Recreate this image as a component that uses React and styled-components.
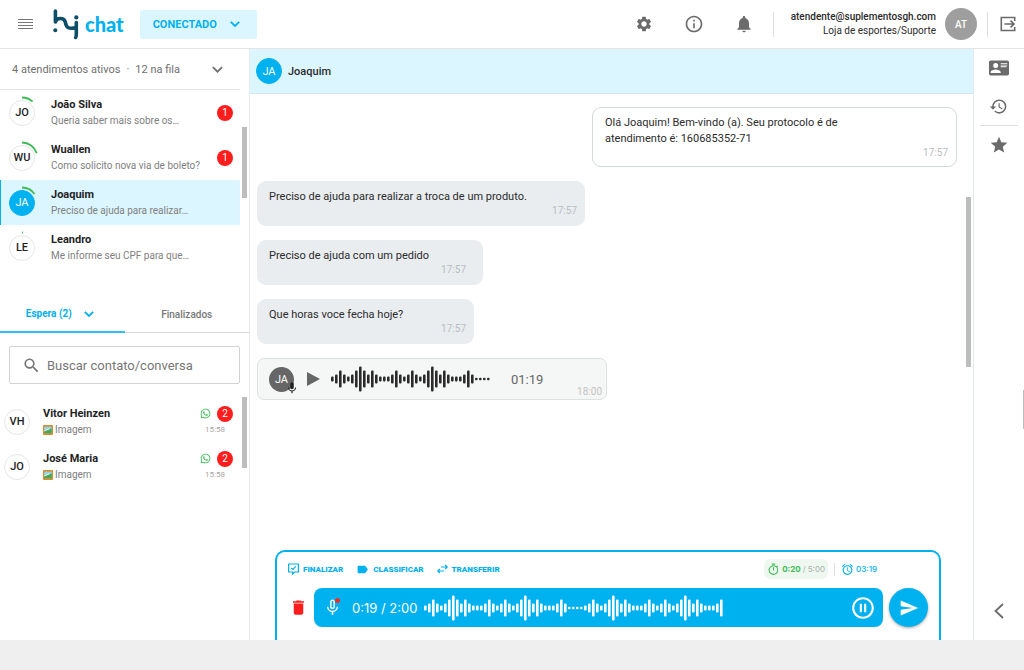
import React from "react";
import styled, { createGlobalStyle } from "styled-components";
import {
  MdAlarm,
  MdDelete,
  MdHistory,
  MdInfoOutline,
  MdLabel,
  MdMic,
  MdMicNone,
  MdNotifications,
  MdOutlineTimer,
  MdPauseCircleOutline,
  MdSearch,
  MdSend,
  MdSettings,
  MdStar,
} from "react-icons/md";
import { FaWhatsapp } from "react-icons/fa";

const active = [
  { initials: "JO", name: "João Silva", text: "Queria saber mais sobre os…", unread: 1, progress: 12 },
  { initials: "WU", name: "Wuallen", text: "Como solicito nova via de boleto?", unread: 1, progress: 20 },
  { initials: "JA", name: "Joaquim", text: "Preciso de ajuda para realizar…", progress: 15, selected: true },
  { initials: "LE", name: "Leandro", text: "Me informe seu CPF para que…", progress: 1 },
];

const waiting = [
  { initials: "VH", name: "Vitor Heinzen", time: "15:58", unread: 2 },
  { initials: "JO", name: "José Maria", time: "15:58", unread: 2 },
];

const messages = [
  { text: "Olá Joaquim! Bem-vindo (a). Seu protocolo é de atendimento é: 160685352-71", time: "17:57", width: 365, own: true },
  { text: "Preciso de ajuda para realizar a troca de um produto.", time: "17:57", width: 328 },
  { text: "Preciso de ajuda com um pedido", time: "17:57", width: 226, inset: 17 },
  { text: "Que horas voce fecha hoje?", time: "17:57", width: 217 },
];

// every digit is a bar, from 0 (a dot) to 4 (the tallest)
const barHeights = [2.4, 5, 9, 17, 25];
const phrase = "123212343232111232123212343232111232";
const audioWave = phrase + "0000";
const recordWave = phrase + "0000" + phrase.slice(0, 35);

const Waveform = ({ data }) => (
  <svg width={data.length * 4} height="26" fill="currentColor" aria-hidden="true">
    {data.split("").map((d, i) => {
      const h = barHeights[d];
      return <rect key={i} x={i * 4} y={(26 - h) / 2} width={2.6} height={h} rx="1" />;
    })}
  </svg>
);

const Chevron = ({ size = 10, width = 1.8 }) => (
  <svg width={size} height={size} viewBox="0 0 10 10" fill="none" stroke="currentColor" strokeWidth={width} aria-hidden="true">
    <path d="M0.8 2.8 L5 7 L9.2 2.8" />
  </svg>
);

const Logo = () => (
  <svg width="27" height="32" viewBox="0 0 27 32" fill="none" aria-hidden="true">
    <g stroke="#0d4e68" strokeWidth="3.6" strokeLinecap="round" strokeLinejoin="round">
      <path d="M3.4 3 V14 C4.5 9.5 12 9 13.3 14 C14.2 20 17 21.5 24.3 19.5" />
      <path d="M24.3 14.5 V26 C24.3 28 24 29 23.6 29.4" />
    </g>
    <circle cx="3.3" cy="22.3" r="2" fill="#0d4e68" />
    <circle cx="24.3" cy="9.4" r="2.1" fill="#0d4e68" />
  </svg>
);

const ExitIcon = () => (
  <svg width="16" height="16" viewBox="0 0 16 16" fill="none" stroke="currentColor" strokeWidth="1.6" aria-hidden="true">
    <path d="M14.7 5 V1.5 H1.3 V14.5 H14.7 V11" />
    <path d="M4.5 8 H14 M10.5 4.6 L14 8 L10.5 11.4" />
  </svg>
);

const CardIcon = () => (
  <svg width="20" height="20" viewBox="0 0 24 24" fill="currentColor" aria-hidden="true">
    <path d="M2,3H22C23.05,3 24,3.95 24,5V19C24,20.05 23.05,21 22,21H2C0.95,21 0,20.05 0,19V5C0,3.95 0.95,3 2,3M14,6V7H22V6H14M14,8V9H22V8H14M14,10V11H21V10H14M8,13.91C6,13.91 2,15 2,17V18H14V17C14,15 10,13.91 8,13.91M8,6A3,3 0 0,0 5,9A3,3 0 0,0 8,12A3,3 0 0,0 11,9A3,3 0 0,0 8,6Z" />
  </svg>
);

const FinishIcon = () => (
  <svg width="11" height="12" viewBox="0 0 11 12" fill="none" stroke="currentColor" strokeWidth="1.2" aria-hidden="true">
    <path d="M0.6 1 H10.4 V9 H6.8 L4.6 11 V9 H0.6 Z" />
    <path d="M3.4 5 L5 6.5 L7.8 3.4" />
  </svg>
);

const TransferIcon = () => (
  <svg width="11" height="10" viewBox="0 0 11 10" fill="none" stroke="currentColor" strokeWidth="1.2" aria-hidden="true">
    <path d="M4 3 H10 M8.2 1 L10.2 3 L8.2 5" />
    <path d="M7 7 H1 M2.8 5 L0.8 7 L2.8 9" />
  </svg>
);

const PictureIcon = () => (
  <svg width="10" height="10" viewBox="0 0 10 10" aria-hidden="true">
    <rect width="10" height="10" rx="1" fill="#d98a2b" />
    <rect x="1.2" y="1.6" width="7.6" height="6.6" fill="#8fd3ee" />
    <path d="M1.2 6 C3 4.4 5 4.8 8.8 3.4 V8.2 H1.2 Z" fill="#4aa653" />
    <path d="M1.2 5.4 L5.6 3.4 L6.6 4.2 L1.2 6.6 Z" fill="#f6f0d6" />
  </svg>
);

const Progress = ({ value }) => (
  <Ring width="34" height="34" viewBox="0 0 34 34" aria-hidden="true">
    <circle
      cx="17"
      cy="17"
      r="15.5"
      fill="none"
      stroke="#3dbb56"
      strokeWidth="1.8"
      pathLength="100"
      strokeDasharray={`${value} 100`}
      transform="rotate(-90 17 17)"
    />
  </Ring>
);

const Header = () => (
  <TopBar>
    <IconButton aria-label="Menu">
      <svg width="15" height="12" stroke="#777" strokeWidth="1.2" aria-hidden="true">
        <path d="M0 1.5 H15 M0 4.5 H15 M0 7.5 H15 M0 10.5 H15" />
      </svg>
    </IconButton>
    <Brand href="#">
      <Logo />
      <BrandName>chat</BrandName>
    </Brand>
    <Status>
      <StatusSelect aria-label="Status">
        <option>CONECTADO</option>
      </StatusSelect>
      <Chevron />
    </Status>
    <Tools>
      <IconButton aria-label="Configurações"><MdSettings size={18} /></IconButton>
      <IconButton aria-label="Informações"><MdInfoOutline size={20} /></IconButton>
      <IconButton aria-label="Notificações"><MdNotifications size={20} /></IconButton>
    </Tools>
    <Divider $height={25} />
    <Account>
      <Email>atendente@suplementosgh.com</Email>
      <span>Loja de esportes/Suporte</span>
    </Account>
    <UserAvatar>AT</UserAvatar>
    <Divider $height={25} />
    <ExitButton aria-label="Sair"><ExitIcon /></ExitButton>
  </TopBar>
);

const Sidebar = () => (
  <Side>
    <QueueButton>
      <span>4 atendimentos ativos</span>
      <span>·</span>
      <span>12 na fila</span>
      <QueueArrow><Chevron size={11} width={1.6} /></QueueArrow>
    </QueueButton>
    <ListArea $minHeight={206}>
      <List>
        {active.map((c) => (
          <ActiveRow key={c.name} $selected={c.selected}>
            <Avatar $filled={c.selected}>
              {c.initials}
              <Progress value={c.progress} />
            </Avatar>
            <RowText>
              <Name>{c.name}</Name>
              <Preview>{c.text}</Preview>
            </RowText>
            {c.unread && <Badge>{c.unread}</Badge>}
          </ActiveRow>
        ))}
      </List>
      <Gutter $top={37}><Thumb $height={71} /></Gutter>
    </ListArea>
    <Tabs>
      <Tab $active>
        Espera (2)
        <Chevron />
      </Tab>
      <Tab>Finalizados</Tab>
    </Tabs>
    <SearchBox>
      <MdSearch size={19} />
      <SearchInput aria-label="Buscar contato/conversa" placeholder="Buscar contato/conversa" />
    </SearchBox>
    <ListArea>
      <WaitingList>
        {waiting.map((c) => (
          <WaitingRow key={c.name}>
            <Avatar>{c.initials}</Avatar>
            <RowText>
              <Name>{c.name}</Name>
              <Preview>
                <PictureIcon />
                Imagem
              </Preview>
            </RowText>
            <RowMeta>
              <MetaTop>
                <FaWhatsapp size={11} />
                <Badge>{c.unread}</Badge>
              </MetaTop>
              <RowTime>{c.time}</RowTime>
            </RowMeta>
          </WaitingRow>
        ))}
      </WaitingList>
      <Gutter><Thumb $height={71} /></Gutter>
    </ListArea>
  </Side>
);

const AudioMessage = () => (
  <AudioBubble>
    <AudioAvatar>
      JA
      <AudioMic><MdMic size={14} /></AudioMic>
    </AudioAvatar>
    <PlayButton aria-label="Reproduzir">
      <svg width="13" height="14" fill="currentColor" aria-hidden="true">
        <path d="M0 0 L13 7 L0 14 Z" />
      </svg>
    </PlayButton>
    <Waveform data={audioWave} />
    <AudioLength>01:19</AudioLength>
    <AudioTime>18:00</AudioTime>
  </AudioBubble>
);

const Composer = () => (
  <ComposerBox>
    <ActionRow>
      <Action><FinishIcon />FINALIZAR</Action>
      <Action><MdLabel size={13} />CLASSIFICAR</Action>
      <Action><TransferIcon />TRANSFERIR</Action>
      <Timers>
        <TimerPill>
          <MdOutlineTimer size={13} />
          <strong>0:20</strong>
          <Limit>/ 5:00</Limit>
        </TimerPill>
        <Divider $height={13} />
        <Alarm>
          <MdAlarm size={13} />
          03:19
        </Alarm>
      </Timers>
    </ActionRow>
    <RecordRow>
      <TrashButton aria-label="Descartar"><MdDelete size={19} /></TrashButton>
      <Recorder>
        <RecordMic>
          <MdMicNone size={19} />
          <RecordDot />
        </RecordMic>
        <span>0:19 / 2:00</span>
        <Waveform data={recordWave} />
        <PauseButton aria-label="Pausar"><MdPauseCircleOutline size={26} /></PauseButton>
      </Recorder>
      <SendButton aria-label="Enviar"><MdSend size={20} /></SendButton>
    </RecordRow>
  </ComposerBox>
);

const App = () => {
  return (
    <Page>
      <GlobalStyle />
      <Window>
        <Header />
        <Content>
          <Sidebar />
          <Chat>
            <ChatHeader>
              <Avatar $filled>JA</Avatar>
              <ChatName>Joaquim</ChatName>
            </ChatHeader>
            <ChatBody>
              <Conversation>
                <Messages>
                  {messages.map((m) => (
                    <Bubble key={m.text} $own={m.own} $width={m.width} $inset={m.inset}>
                      <BubbleText>{m.text}</BubbleText>
                      <BubbleTime>{m.time}</BubbleTime>
                    </Bubble>
                  ))}
                  <AudioMessage />
                </Messages>
                <Composer />
              </Conversation>
              <Gutter $top={103}><Thumb $height={170} /></Gutter>
            </ChatBody>
          </Chat>
          <Rail>
            <IconButton aria-label="Contato"><CardIcon /></IconButton>
            <IconButton aria-label="Histórico"><MdHistory size={19} /></IconButton>
            <RailLine />
            <IconButton aria-label="Favoritos"><MdStar size={20} /></IconButton>
            <CollapseButton aria-label="Abrir painel">
              <svg width="10" height="16" fill="none" stroke="currentColor" strokeWidth="1.8" aria-hidden="true">
                <path d="M9 1 L1.5 8 L9 15" />
              </svg>
            </CollapseButton>
          </Rail>
          <Gutter $top={341} $width={1}><Thumb $height={39} /></Gutter>
        </Content>
      </Window>
    </Page>
  );
};

const GlobalStyle = createGlobalStyle`
  * {
    box-sizing: border-box;
  }

  body {
    margin: 0;
    background: #efefef;
    color: #2b2b2b;
    font-family: Roboto, "Liberation Sans", sans-serif;
    font-size: 11px;
  }

  button, input, select {
    margin: 0;
    padding: 0;
    border: 0;
    background: none;
    color: inherit;
    font: inherit;
  }

  svg {
    display: block;
    flex: none;
  }
`;

const Page = styled.div`
  display: flex;
  min-height: 100vh;
  padding-bottom: 30px;
`;

const Window = styled.div`
  flex: 1;
  display: flex;
  flex-direction: column;
  background: #fff;
`;

const TopBar = styled.header`
  display: flex;
  align-items: center;
  height: 49px;
  padding: 0 8px 0 15px;
  border-bottom: 1px solid #e4e4e4;
`;

const IconButton = styled.button`
  display: flex;
  align-items: center;
  justify-content: center;
  width: 20px;
  height: 20px;
  color: #6b6b6b;
`;

const Brand = styled.a`
  display: flex;
  align-items: center;
  gap: 6px;
  margin-left: 17px;
  text-decoration: none;
`;

const BrandName = styled.span`
  color: #00b1f0;
  font-family: Lato, sans-serif;
  font-size: 20px;
  font-weight: 900;
`;

const Status = styled.div`
  display: flex;
  align-items: center;
  gap: 12px;
  height: 29px;
  margin-left: 16px;
  padding: 0 17px 0 13px;
  border-radius: 2px;
  background: #dcf6ff;
  color: #00b1f0;
`;

const StatusSelect = styled.select`
  appearance: none;
  font-weight: 700;
`;

const Tools = styled.div`
  display: flex;
  gap: 30px;
  margin: 0 19px 0 auto;
`;

const Divider = styled.div`
  width: 1px;
  height: ${({ $height }) => $height}px;
  background: #dedede;
`;

const Account = styled.div`
  display: flex;
  flex-direction: column;
  align-items: flex-end;
  margin: 0 9px 0 17px;
  font-size: 10px;
  line-height: 14px;
`;

const Email = styled.span`
  font-weight: 500;
`;

const UserAvatar = styled.div`
  display: flex;
  align-items: center;
  justify-content: center;
  width: 32px;
  height: 32px;
  margin-right: 10px;
  border-radius: 50%;
  background: #9e9e9e;
  color: #fff;
  font-size: 10px;
  font-weight: 500;
`;

const ExitButton = styled(IconButton)`
  width: 16px;
  margin-left: 12px;
`;

const Content = styled.div`
  flex: 1;
  display: flex;
`;

const Side = styled.aside`
  flex: none;
  width: 250px;
  border-right: 1px solid #e6eaec;
`;

const QueueButton = styled.button`
  display: flex;
  align-items: center;
  gap: 6px;
  width: 240px;
  height: 41px;
  padding: 0 17px 0 12px;
  border-bottom: 1px solid #e4e4e4;
  color: #6f6f6f;
`;

const QueueArrow = styled.span`
  margin-left: auto;
`;

const ListArea = styled.div`
  display: flex;
  min-height: ${({ $minHeight = 0 }) => $minHeight}px;
`;

const List = styled.div`
  flex: 1;
`;

const WaitingList = styled(List)`
  padding-top: 2px;
`;

const Gutter = styled.div`
  flex: none;
  width: ${({ $width = 9 }) => $width}px;
  padding: ${({ $top = 0 }) => $top}px ${({ $width = 9 }) => ($width > 1 ? 2 : 0)}px 0;
`;

const Thumb = styled.div`
  height: ${({ $height }) => $height}px;
  background: #bdbdbd;
`;

const ActiveRow = styled.div`
  display: flex;
  align-items: center;
  gap: 16px;
  height: 45px;
  padding: 0 7px 0 9px;
  background: ${({ $selected }) => ($selected ? "#dcf6ff" : "transparent")};
  box-shadow: ${({ $selected }) => ($selected ? "inset 1px 0 #00b1f0" : "none")};
`;

const WaitingRow = styled.div`
  display: flex;
  align-items: center;
  gap: 13px;
  height: 45px;
  padding: 0 7px 0 4px;
`;

const Avatar = styled.div`
  position: relative;
  flex: none;
  display: flex;
  align-items: center;
  justify-content: center;
  width: 26px;
  height: 26px;
  border: 1px solid ${({ $filled }) => ($filled ? "#00b1f0" : "#e6e6e6")};
  border-radius: 50%;
  background: ${({ $filled }) => ($filled ? "#00b1f0" : "#fff")};
  color: ${({ $filled }) => ($filled ? "#fff" : "#222")};
  font-size: 11px;
  font-weight: ${({ $filled }) => ($filled ? 400 : 500)};
`;

const Ring = styled.svg`
  position: absolute;
  inset: -5px;
`;

const RowText = styled.div`
  flex: 1;
  min-width: 0;
  line-height: 16px;
`;

const Name = styled.div`
  color: #1f1f1f;
  font-weight: 700;
`;

const Preview = styled.div`
  display: flex;
  align-items: center;
  gap: 2px;
  color: #808080;
  font-size: 10px;
  white-space: nowrap;
`;

const Badge = styled.span`
  display: flex;
  align-items: center;
  justify-content: center;
  width: 16px;
  height: 16px;
  border-radius: 50%;
  background: #ff1d1d;
  color: #fff;
  font-size: 10px;
`;

const RowMeta = styled.div`
  display: flex;
  flex-direction: column;
  align-items: flex-end;
`;

const MetaTop = styled.div`
  display: flex;
  align-items: center;
  gap: 6px;
  color: #3dbb56;
`;

const RowTime = styled.span`
  padding-right: 8px;
  color: #a5a5a5;
  font-size: 8px;
  line-height: 16px;
`;

const Tabs = styled.div`
  display: flex;
`;

const Tab = styled.button`
  display: flex;
  align-items: center;
  justify-content: center;
  gap: 12px;
  width: 50%;
  height: 37px;
  padding-right: ${({ $active }) => ($active ? 5 : 0)}px;
  border-bottom: ${({ $active }) => ($active ? "2px solid #2cc1f5" : "1px solid #dcdcdc")};
  color: ${({ $active }) => ($active ? "#00b1f0" : "#777")};
  font-size: 10px;
  font-weight: ${({ $active }) => ($active ? 700 : 500)};
`;

const SearchBox = styled.label`
  display: flex;
  align-items: center;
  gap: 6px;
  height: 38px;
  margin: 13px 9px 13px;
  padding: 0 12px;
  border: 1px solid #d3d3d3;
  border-radius: 2px;
  color: #777;
`;

const SearchInput = styled.input`
  flex: 1;
  min-width: 0;
  outline: none;
  font-size: 13px;

  &::placeholder {
    color: #777;
    opacity: 1;
  }
`;

const Chat = styled.main`
  flex: 1;
  display: flex;
  flex-direction: column;
  min-width: 0;
`;

const ChatHeader = styled.div`
  display: flex;
  align-items: center;
  gap: 6px;
  height: 45px;
  padding-left: 6px;
  border-bottom: 1px solid #d5e6ec;
  background: #dcf6ff;
`;

const ChatName = styled.h1`
  margin: 0;
  font-size: 11px;
  font-weight: 500;
`;

const ChatBody = styled.div`
  flex: 1;
  display: flex;
`;

const Conversation = styled.div`
  flex: 1;
  display: flex;
  flex-direction: column;
  justify-content: space-between;
`;

const Messages = styled.div`
  display: flex;
  flex-direction: column;
  gap: 14px;
  padding: 13px 7px 24px;
`;

const Bubble = styled.div`
  align-self: ${({ $own }) => ($own ? "flex-end" : "flex-start")};
  width: ${({ $width }) => $width}px;
  max-width: 100%;
  min-height: 45px;
  padding: ${({ $own }) => ($own ? 7 : 8)}px ${({ $inset = 8 }) => $inset}px 7px 12px;
  border: ${({ $own }) => ($own ? "1px solid #d3d8da" : "0")};
  border-radius: 9px;
  background: ${({ $own }) => ($own ? "#fff" : "#e9edf0")};
`;

const BubbleText = styled.p`
  max-width: 280px;
  margin: 0;
  line-height: 16px;
`;

const BubbleTime = styled.div`
  color: #b9bdbf;
  font-size: 10px;
  line-height: 12px;
  text-align: right;
`;

const AudioBubble = styled.div`
  display: flex;
  align-items: center;
  align-self: flex-start;
  width: 350px;
  height: 42px;
  padding: 0 4px 0 11px;
  border: 1px solid #dde2e1;
  border-radius: 7px;
  background: #f5f6f6;
`;

const AudioAvatar = styled.div`
  position: relative;
  display: flex;
  align-items: center;
  justify-content: center;
  width: 25px;
  height: 25px;
  border-radius: 50%;
  background: #666;
  color: #fff;
`;

const AudioMic = styled.span`
  position: absolute;
  right: -5px;
  bottom: -3px;
  color: #222;
`;

const PlayButton = styled.button`
  margin: 0 11px 0 13px;
  color: #666;
`;

const AudioLength = styled.span`
  margin-left: 20px;
  color: #666;
  font-size: 13px;
`;

const AudioTime = styled.span`
  align-self: flex-end;
  margin-left: auto;
  color: #c4c4c4;
  font-size: 10px;
  line-height: 14px;
`;

const ComposerBox = styled.div`
  display: flex;
  flex-direction: column;
  gap: 9px;
  margin: 0 23px 0 25px;
  padding: 7px 11px 13px;
  border: 2px solid #00b1f0;
  border-bottom: 0;
  border-radius: 10px 10px 0 0;
`;

const ActionRow = styled.div`
  display: flex;
  align-items: center;
  gap: 13px;
  height: 20px;
`;

const Action = styled.button`
  display: flex;
  align-items: center;
  gap: 4px;
  color: #00b1f0;
  font-size: 8px;
  font-weight: 900;
`;

const Timers = styled.div`
  display: flex;
  align-items: center;
  gap: 6px;
  margin: 0 51px 0 auto;
  font-family: Inter, sans-serif;
  font-size: 8px;
`;

const TimerPill = styled.div`
  display: flex;
  align-items: center;
  gap: 2px;
  height: 20px;
  padding: 0 3px;
  border-radius: 6px;
  background: #eef8f0;
  color: #3dbb56;
`;

const Limit = styled.span`
  color: #a9b0ab;
`;

const Alarm = styled.div`
  display: flex;
  align-items: center;
  gap: 2px;
  color: #00b1f0;
  font-weight: 500;
`;

const RecordRow = styled.div`
  display: flex;
  align-items: center;
  gap: 6px;
`;

const TrashButton = styled(IconButton)`
  color: #ff1d1d;
`;

const Recorder = styled.div`
  flex: 1;
  display: flex;
  align-items: center;
  gap: 7px;
  height: 39px;
  padding: 0 7px 0 9px;
  border-radius: 8px;
  background: #00b1f0;
  color: #fff;
  font-family: Inter, sans-serif;
  font-size: 13px;
`;

const RecordMic = styled.span`
  position: relative;
  margin-right: 3px;
`;

const RecordDot = styled.span`
  position: absolute;
  top: 0;
  right: 2px;
  width: 5px;
  height: 5px;
  border-radius: 50%;
  background: #e5322d;
`;

const PauseButton = styled.button`
  margin-left: auto;
`;

const SendButton = styled.button`
  display: flex;
  align-items: center;
  justify-content: center;
  width: 39px;
  height: 39px;
  border-radius: 50%;
  background: #00b1f0;
  color: #fff;
  box-shadow: 0 1px 3px rgba(0, 0, 0, 0.35);
`;

const Rail = styled.nav`
  flex: none;
  display: flex;
  flex-direction: column;
  align-items: center;
  gap: 18px;
  width: 50px;
  padding: 9px 0 19px;
  border-left: 1px solid #e3e8ea;
`;

const RailLine = styled.div`
  width: 38px;
  height: 1px;
  margin: -9px 0;
  background: #dedede;
`;

const CollapseButton = styled(IconButton)`
  margin-top: auto;
`;

export default App;
